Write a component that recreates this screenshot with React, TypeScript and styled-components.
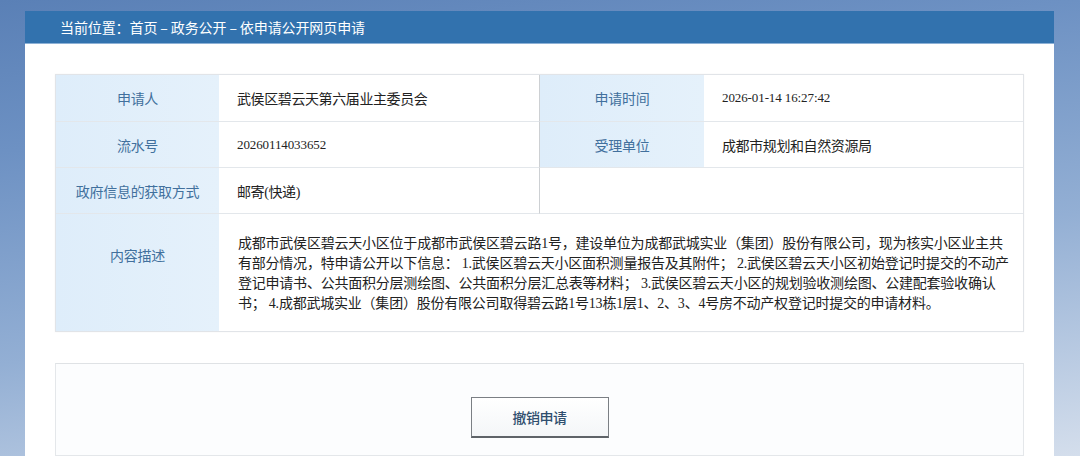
import React from "react";
import styled, { createGlobalStyle } from "styled-components";

const GlobalStyle = createGlobalStyle`
  html, body {
    margin: 0;
    padding: 0;
    min-height: 100%;
  }
  body {
    background: linear-gradient(172deg, #5a80b6 0%, #6d91c3 25%, #93afd4 60%, #d4deec 100%);
    font-family: "Noto Sans CJK SC", "Noto Sans", sans-serif;
    overflow: hidden;
  }
`;

const Page = styled.div`
  width: 1029px;
  margin-left: 25px;
  padding-top: 11px;
  height: 445px;
  display: flex;
  flex-direction: column;
`;

const Breadcrumb = styled.div`
  height: 32px;
  background: #3272ae;
  border-bottom: 1px solid #8db1d6;
  color: #ffffff;
  font-size: 14px;
  line-height: 32px;
  padding-left: 35px;
  white-space: pre;
  letter-spacing: -0.1px;
`;

const Panel = styled.div`
  flex: 1;
  background: #ffffff;
  padding: 30px 30px 0 30px;
  display: flex;
  flex-direction: column;
  gap: 31px;
  overflow: hidden;
`;

const Table = styled.div`
  display: grid;
  grid-template-columns: 163px 321px 164px 1fr;
  grid-template-rows: 47px 46px 46px 117px;
  border: 1px solid #e1e4e8;
  box-shadow: 0 0 2px rgba(0, 0, 0, 0.04);
`;

const Label = styled.div<{ $top?: boolean }>`
  background: linear-gradient(90deg, #deedfa 0%, #e5f1fb 100%);
  color: #41709d;
  font-size: 14px;
  letter-spacing: -0.3px;
  display: flex;
  align-items: ${(p) => (p.$top ? "flex-start" : "center")};
  padding-top: ${(p) => (p.$top ? "31px" : "0")};
  justify-content: center;
  border-bottom: ${(p) => (p.$top ? "none" : "1px solid #e3e7eb")};
`;

const Value = styled.div<{ $divider?: boolean; $num?: boolean; $span?: number }>`
  background: #ffffff;
  color: #222222;
  font-family: "Liberation Serif", "Noto Sans CJK SC", serif;
  font-size: ${(p) => (p.$num ? "13px" : "14px")};
  letter-spacing: ${(p) => (p.$num ? "-0.1px" : "-0.4px")};
  display: flex;
  align-items: center;
  padding-left: 18px;
  border-bottom: 1px solid #e3e7eb;
  border-right: ${(p) => (p.$divider ? "1px solid #cdd0d3" : "none")};
  grid-column: ${(p) => (p.$span ? `span ${p.$span}` : "auto")};
`;

const Description = styled.div`
  grid-column: span 3;
  background: #ffffff;
  color: #222222;
  font-family: "Liberation Serif", "Noto Sans CJK SC", serif;
  font-size: 14px;
  letter-spacing: -0.22px;
  line-height: 20px;
  padding: 20px 18px 0 19px;
  white-space: nowrap;
`;

const ActionBox = styled.div`
  height: 120px;
  border: 1px solid #e4e7ea;
  border-top-color: #dfe2e5;
  background: #fcfdfe;
  display: flex;
  justify-content: center;
  padding-top: 33px;
  box-sizing: border-box;
`;

const CancelButton = styled.button`
  width: 138px;
  height: 41px;
  border: 1px solid #7b7f84;
  border-bottom: 2px solid #5e6368;
  background: linear-gradient(180deg, #ffffff 0%, #f4f6f8 100%);
  color: #2f4e6e;
  font-family: "Noto Sans CJK SC", sans-serif;
  font-size: 14px;
  font-weight: 500;
  letter-spacing: -0.5px;
  cursor: pointer;
  padding: 0;
`;

const rows = [
  ["申请人", "武侯区碧云天第六届业主委员会", false, "申请时间", "2026-01-14 16:27:42", true],
  ["流水号", "20260114033652", true, "受理单位", "成都市规划和自然资源局", false],
] as const;

export default function App() {
  return (
    <>
      <GlobalStyle />
      <Page>
        <Breadcrumb>当前位置：首页 – 政务公开 – 依申请公开网页申请</Breadcrumb>
        <Panel>
          <Table>
            {rows.map((r) => (
              <React.Fragment key={r[0]}>
                <Label>{r[0]}</Label>
                <Value $divider $num={r[2]}>
                  {r[1]}
                </Value>
                <Label>{r[3]}</Label>
                <Value $num={r[5]}>{r[4]}</Value>
              </React.Fragment>
            ))}
            <Label>政府信息的获取方式</Label>
            <Value $divider>邮寄(快递)</Value>
            <Value $span={2} />
            <Label $top>内容描述</Label>
            <Description>
              成都市武侯区碧云天小区位于成都市武侯区碧云路1号，建设单位为成都武城实业（集团）股份有限公司，现为核实小区业主共
              <br />
              有部分情况，特申请公开以下信息： 1.武侯区碧云天小区面积测量报告及其附件； 2.武侯区碧云天小区初始登记时提交的不动产
              <br />
              登记申请书、公共面积分层测绘图、公共面积分层汇总表等材料； 3.武侯区碧云天小区的规划验收测绘图、公建配套验收确认
              <br />
              书； 4.成都武城实业（集团）股份有限公司取得碧云路1号13栋1层1、2、3、4号房不动产权登记时提交的申请材料。
            </Description>
          </Table>
          <ActionBox>
            <CancelButton>撤销申请</CancelButton>
          </ActionBox>
        </Panel>
      </Page>
    </>
  );
}
